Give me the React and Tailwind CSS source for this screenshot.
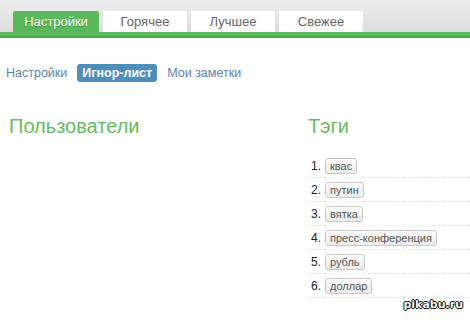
import React from 'react';

const tabs = ['Настройки', 'Горячее', 'Лучшее', 'Свежее'];
const tags = ['квас', 'путин', 'вятка', 'пресс-конференция', 'рубль', 'доллар'];

export default function App() {
  return (
    <div className="w-[470px] h-[320px] bg-white overflow-hidden relative font-['Liberation_Sans','Noto_Sans',sans-serif]">
      {/* верхние вкладки */}
      <div className="h-[32px] bg-gradient-to-b from-[#ececec] to-[#dedede] flex items-end pl-[13px] gap-[4px]">
        {tabs.map((t, i) => (
          <div
            key={t}
            className={
              i === 0
                ? 'w-[86px] h-[21px] rounded-t-[2px] bg-[#5cb85c] text-white text-[13px] flex items-center justify-center [text-shadow:0_1px_1px_rgba(0,0,0,0.25)]'
                : 'w-[84px] h-[21px] bg-white text-[#666] text-[13px] flex items-center justify-center'
            }
          >
            {t}
          </div>
        ))}
      </div>
      <div className="h-[6px] bg-[#5cb85c] border-b-2 border-[#48a848]" />

      {/* подменю */}
      <div className="flex items-center mt-[26px] pl-[6px] text-[12.5px] text-[#5b83ad]">
        <span>Настройки</span>
        <span className="ml-[10px] h-[18px] px-[5px] rounded-[3px] bg-[#4f8ebb] text-white font-bold flex items-center">Игнор-лист</span>
        <span className="ml-[10px]">Мои заметки</span>
      </div>

      <div className="grid grid-cols-[308px_1fr] mt-[31px]">
        <div className="pl-[9px]">
          <h2 className="text-[20px] leading-[24px] text-[#68bb5e]">Пользователи</h2>
        </div>
        <div>
          <h2 className="text-[20px] leading-[24px] text-[#68bb5e]">Тэги</h2>
          <ol className="mt-[16px]">
            {tags.map((t, i) => (
              <li key={t} className="h-[24px] pt-[4px] flex items-start border-b border-dashed border-[#e2e2e2]">
                <span className="w-[17px] pl-[3px] text-[12px] leading-[16px] text-[#222]">{i + 1}.</span>
                <span className="h-[16px] px-[4px] rounded-[3px] border border-[#c8c8c8] bg-gradient-to-b from-[#fafafa] to-[#ececec] text-[11px] leading-[14px] text-[#555]">
                  {t}
                </span>
              </li>
            ))}
          </ol>
        </div>
      </div>

      <div className="absolute right-[7px] bottom-[7px] text-[11px] font-bold text-white font-['DejaVu_Sans',sans-serif] [text-shadow:1px_0_0_#000,-1px_0_0_#000,0_1px_0_#000,0_-1px_0_#000]">
        pikabu.ru
      </div>
    </div>
  );
}
